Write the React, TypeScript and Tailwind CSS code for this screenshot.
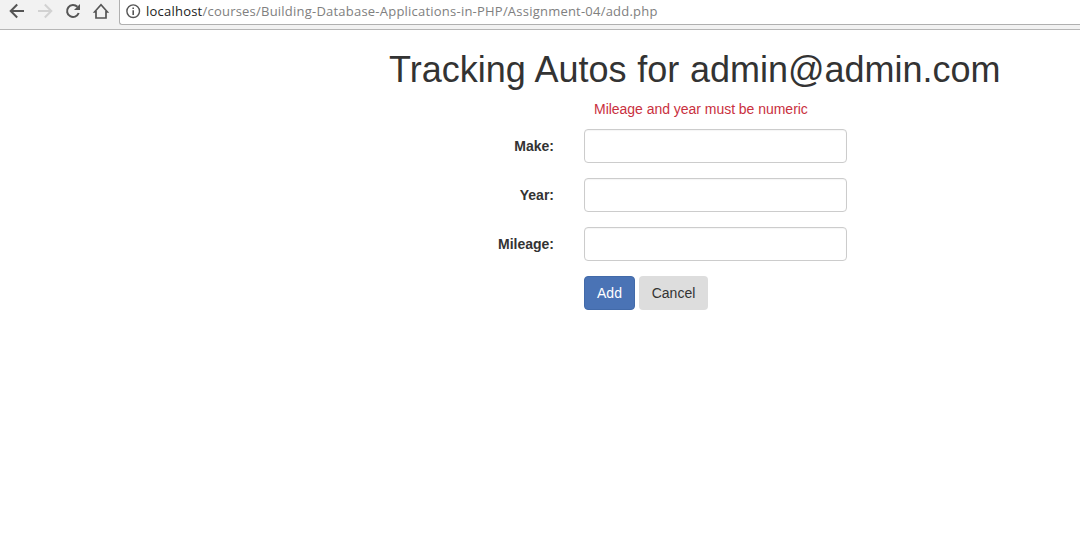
import React from "react";

const fields = ["Make:", "Year:", "Mileage:"];

export default function App() {
  return (
    <div className="h-[551px] overflow-hidden bg-white font-['Liberation_Sans',Arial,sans-serif] text-sm text-[#333]">
      <header className="flex h-[30px] items-start border-b border-[#b6b6b6] bg-[#f2f2f2]">
        <svg width="119" height="24" viewBox="0 0 119 24" fill="none" stroke="#555" strokeWidth="2" className="shrink-0">
          <path d="M24 11H11M17.200 4.500L10.700 11L17.200 17.500" />
          <path d="M38 11H51M44.800 4.500L51.300 11L44.800 17.500" stroke="#d2d2d2" />
          <path d="M77.400 6.800A6 6 0 1 0 78.700 13" />
          <path d="M80 4V10H74Z" fill="#555" stroke="none" />
          <path d="M96 11.800H94.700L101 4.800L107.300 11.800H106V18H96Z" strokeWidth="1.700" />
        </svg>
        <div className="flex h-[25px] flex-1 items-start gap-[5px] rounded-bl-[3px] border-b border-l border-[#b0b0b0] bg-white pl-[6px]">
          <svg width="15" height="15" viewBox="0 0 15 15" fill="none" stroke="#555" strokeWidth="1.400" className="mt-[4px] shrink-0">
            <circle cx="7.200" cy="7.200" r="6.300" />
            <path d="M7.200 6.200V11M7.200 3.500V5" strokeWidth="1.600" />
          </svg>
          <div className="mt-[2px] whitespace-nowrap font-['Open_Sans',sans-serif] text-[13px] leading-[19px] tracking-[0.222px] text-[#808080]">
            <span className="text-[#222]">localhost</span>/courses/Building-Database-Applications-in-PHP/Assignment-04/add.php
          </div>
        </div>
      </header>
      <main className="pt-5">
        <h1 className="ml-[389px] whitespace-nowrap text-[36px] leading-[40px] [word-spacing:0.7px]">Tracking Autos for admin@admin.com</h1>
        <p className="ml-[594px] mt-[9px] leading-5 tracking-[-0.03px] text-[#c9303e]">Mileage and year must be numeric</p>
        <form className="mt-[10px] flex flex-col gap-[15px]">
          {fields.map((label) => (
            <label key={label} className="flex h-[34px] items-center gap-[30px]">
              <span className="w-[554px] text-right font-bold">{label}</span>
              <input className="h-[34px] w-[263px] rounded-[4px] border border-[#ccc] px-3 shadow-[inset_0_1px_1px_rgba(0,0,0,0.04)]" />
            </label>
          ))}
          <div className="ml-[584px] flex gap-1">
            <button type="button" className="h-[34px] w-[51px] rounded-[4px] border border-[#426aa9] bg-[#4a73b5] text-white">Add</button>
            <button type="button" className="h-[34px] w-[69px] rounded-[4px] bg-[#ddd]">Cancel</button>
          </div>
        </form>
      </main>
    </div>
  );
}
